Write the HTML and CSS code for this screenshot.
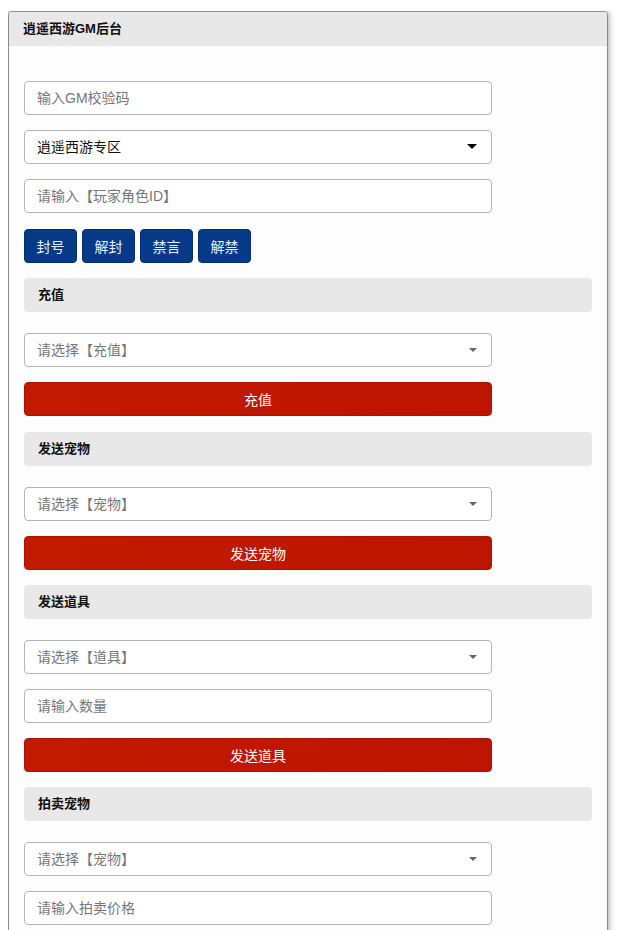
FILE: index.html
```html
<!DOCTYPE html>
<html>
    <head>
        <meta charset="utf-8">
        <title>逍遥西游GM后台</title>
        <link rel="stylesheet" href="styles.css">
    </head>
    <body>
        <div class="panel">
            <div class="panel-heading">逍遥西游GM后台</div>

            <div class="panel-body">
                <input class="field" type="text" placeholder="输入GM校验码">

                <div class="select dark">逍遥西游专区</div>

                <input class="field" type="text" placeholder="请输入【玩家角色ID】">

                <div class="btn-row">
                    <button class="btn-blue">封号</button>
                    <button class="btn-blue">解封</button>
                    <button class="btn-blue">禁言</button>
                    <button class="btn-blue">解禁</button>
                </div>

                <h3 class="section">充值</h3>
                <div class="select">请选择【充值】</div>
                <button class="btn-red first">充值</button>

                <h3 class="section">发送宠物</h3>
                <div class="select">请选择【宠物】</div>
                <button class="btn-red">发送宠物</button>

                <h3 class="section">发送道具</h3>
                <div class="select">请选择【道具】</div>
                <input class="field" type="text" placeholder="请输入数量">
                <button class="btn-red">发送道具</button>

                <h3 class="section">拍卖宠物</h3>
                <div class="select">请选择【宠物】</div>
                <input class="field" type="text" placeholder="请输入拍卖价格">
            </div>
        </div>
    </body>
</html>
```

FILE: styles.css
```css
body {
    margin: 11px 0 0 8px;
    padding: 0;
    background: #FFFFFF;
    color: #111;
    font-family: "Liberation Sans", "Noto Sans CJK SC", sans-serif;
    font-size: 14px;
}

.panel {
    width: 598px;
    border: 1px solid #8A8A8A;
    border-radius: 4px;
    background: #FDFDFD;
    box-shadow: 0 0 7px rgba(0, 0, 0, 0.45);
    overflow: hidden;
}

.panel-heading {
    height: 34px;
    line-height: 34px;
    padding: 0 14px;
    background: #E8E8E8;
    font-size: 13px;
    font-weight: bold;
}

.panel-body {
    display: flex;
    flex-direction: column;
    align-items: flex-start;
    padding: 35px 15px 20px 15px;
}

.field,
.select {
    box-sizing: border-box;
    width: 468px;
    height: 34px;
    margin: 0 0 15px 0;
    padding: 0 12px;
    border: 1px solid #B5B5B5;
    border-radius: 4px;
    background: #FFF;
    font-family: inherit;
    font-size: 14px;
    color: #111;
    outline: none;
}
.field::placeholder { color: #777; }

.select {
    position: relative;
    line-height: 32px;
    color: #777;
}
.select::after {
    content: "";
    position: absolute;
    top: 14px; right: 14px;
    border-left: 4px solid transparent;
    border-right: 4px solid transparent;
    border-top: 4px solid #666;
}
.select.dark { color: #111; }
.select.dark::after {
    top: 13px;
    border-left-width: 5px;
    border-right-width: 5px;
    border-top: 5px solid #000;
}

.btn-row {
    display: flex;
    gap: 5px;
    margin: 1px 0 15px 0;
}
.btn-blue {
    width: 53px;
    height: 34px;
    padding: 0;
    border: 1px solid #02306E;
    border-radius: 4px;
    background: #043A88;
    color: #E4EEFA;
    font-family: inherit;
    font-size: 14px;
}

.btn-red {
    width: 468px;
    height: 34px;
    margin: 0 0 15px 0;
    border: 1px solid #A81400;
    border-radius: 4px;
    background: linear-gradient(90deg, #C21A00, #BD1400);
    color: #FFF;
    font-family: inherit;
    font-size: 14px;
}
.btn-red.first { margin-bottom: 16px; }

.section {
    box-sizing: border-box;
    align-self: stretch;
    height: 34px;
    line-height: 34px;
    margin: 0 0 21px 0;
    padding: 0 14px;
    border-radius: 4px;
    background: #E8E8E8;
    font-size: 13px;
    font-weight: bold;
}
```
